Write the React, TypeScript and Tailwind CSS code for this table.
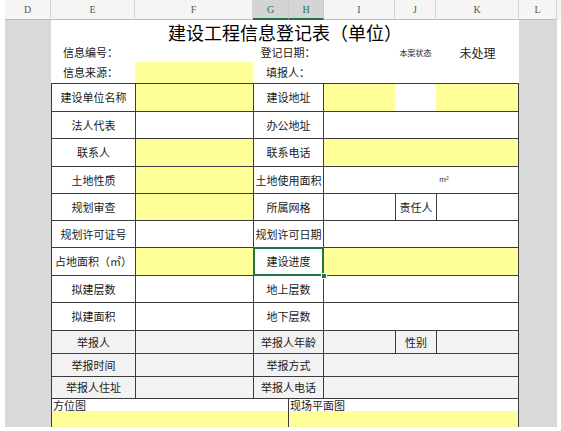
import type { ReactNode } from "react";

const cjk = "font-['Noto_Sans_CJK_SC','Noto_Sans',sans-serif]";

type CellProps = {
  children?: ReactNode;
  className?: string;
};

function Label({ children, className = "bg-white" }: CellProps) {
  return (
    <div className={`flex items-center justify-center text-[11px] text-[#1a1a1a] ${className}`}>
      {children}
    </div>
  );
}

function Fill({ className = "bg-white" }: CellProps) {
  return <div className={className} />;
}

const headers = [
  { key: "D", width: "w-[46px]" },
  { key: "E", width: "w-[84px]" },
  { key: "F", width: "w-[118px]" },
  { key: "G", width: "w-[36px]", active: true },
  { key: "H", width: "w-[35px]", active: true },
  { key: "I", width: "w-[71px]" },
  { key: "J", width: "w-[41px]" },
  { key: "K", width: "w-[83px]" },
  { key: "L", width: "w-[38px]" }
];

export default function App() {
  const yellow = "bg-[#ffff99]";
  const gray = "bg-[#f2f2f2]";

  return (
    <div className={`h-[431px] w-[561px] overflow-hidden bg-white pl-[5px] ${cjk}`}>
      {/* column headers */}
      <div className="flex h-[20px] bg-[#f5f5f5] font-['Liberation_Serif',serif] text-[10px] text-[#555]">
        {headers.map((h) => (
          <div
            key={h.key}
            className={
              h.active
                ? `${h.width} flex items-center justify-center border-r border-b-2 border-r-[#c8c8c8] border-b-[#217346] bg-[#d4d4d4] text-[#217346]`
                : `${h.width} flex items-center justify-center border-r border-b border-r-[#d4d4d4] border-b-[#bdbdbd]`
            }
          >
            {h.key}
          </div>
        ))}
      </div>

      <div className="flex h-[407px]">
        <div className="w-[46px] bg-[#d9d9d9]" />

        <div className="flex w-[468px] flex-col bg-white">
          <div className="flex h-[23px] items-center justify-center text-[18px] leading-none text-black">
            建设工程信息登记表（单位）
          </div>

          <div className="grid h-[19px] grid-cols-[84px_118px_70px_72px_41px_83px] items-center text-[11px] text-[#1a1a1a]">
            <span className="pl-[12px]">信息编号：</span>
            <span />
            <span className="text-center">登记日期：</span>
            <span />
            <span className="text-center text-[8px]">本案状态</span>
            <span className="text-center text-[12px]">未处理</span>
          </div>

          <div className="grid h-[21px] grid-cols-[84px_118px_70px_72px_41px_83px] items-center text-[11px] text-[#1a1a1a]">
            <span className="pl-[12px]">信息来源：</span>
            <span className={`h-full ${yellow}`} />
            <span className="text-center">填报人：</span>
          </div>

          <div className="grid flex-1 grid-cols-[83px_117px_34px_34px_71px_40px_81px] grid-rows-[27px_26px_27px_26px_26px_26px_27px_26px_27px_22px_22px_21px_28px] gap-px border-x border-t border-[#3c3c3c] bg-[#3c3c3c]">
            <Label>建设单位名称</Label>
            <Fill className={yellow} />
            <Label className="col-span-2 bg-white">建设地址</Label>
            <div className="col-span-3 flex">
              <div className={`w-[71px] ${yellow}`} />
              <div className="w-[41px] bg-white" />
              <div className={`flex-1 ${yellow}`} />
            </div>

            <Label>法人代表</Label>
            <Fill />
            <Label className="col-span-2 bg-white">办公地址</Label>
            <Fill className="col-span-3 bg-white" />

            <Label>联系人</Label>
            <Fill className={yellow} />
            <Label className="col-span-2 bg-white">联系电话</Label>
            <Fill className={`col-span-3 ${yellow}`} />

            <Label>土地性质</Label>
            <Fill className={yellow} />
            <Label className="col-span-2 bg-white">土地使用面积</Label>
            <div className="col-span-3 flex items-center justify-center bg-white pl-[46px] font-['Liberation_Sans',sans-serif] text-[8px] text-[#333]">
              m²
            </div>

            <Label>规划审查</Label>
            <Fill className={yellow} />
            <Label className="col-span-2 bg-white">所属网格</Label>
            <Fill />
            <Label>责任人</Label>
            <Fill />

            <Label>规划许可证号</Label>
            <Fill />
            <Label className="col-span-2 bg-white">规划许可日期</Label>
            <Fill className="col-span-3 bg-white" />

            <Label>占地面积（㎡）</Label>
            <Fill className={yellow} />
            <div className="relative col-span-2 flex items-center justify-center bg-white text-[11px] text-[#1a1a1a]">
              建设进度
              <div className="pointer-events-none absolute -inset-px z-10 border-2 border-[#217346]" />
              <div className="absolute -right-[4px] -bottom-[4px] z-20 size-[6px] border border-white bg-[#217346]" />
            </div>
            <Fill className={`col-span-3 ${yellow}`} />

            <Label>拟建层数</Label>
            <Fill />
            <Label className="col-span-2 bg-white">地上层数</Label>
            <Fill className="col-span-3 bg-white" />

            <Label>拟建面积</Label>
            <Fill />
            <Label className="col-span-2 bg-white">地下层数</Label>
            <Fill className="col-span-3 bg-white" />

            <Label className={gray}>举报人</Label>
            <Fill className={gray} />
            <Label className={`col-span-2 ${gray}`}>举报人年龄</Label>
            <Fill className={gray} />
            <Label className={gray}>性别</Label>
            <Fill className={gray} />

            <Label className={gray}>举报时间</Label>
            <Fill className={gray} />
            <Label className={`col-span-2 ${gray}`}>举报方式</Label>
            <Fill className={`col-span-3 ${gray}`} />

            <Label className={gray}>举报人住址</Label>
            <Fill className={gray} />
            <Label className={`col-span-2 ${gray}`}>举报人电话</Label>
            <Fill className={`col-span-3 ${gray}`} />

            <div className="col-span-3 flex flex-col bg-white text-[11px] text-[#1a1a1a]">
              <span className="h-[12px] pl-px leading-[12px]">方位图</span>
              <div className={`flex-1 ${yellow}`} />
            </div>
            <div className="col-span-4 flex flex-col bg-white text-[11px] text-[#1a1a1a]">
              <span className="h-[12px] pl-px leading-[12px]">现场平面图</span>
              <div className={`flex-1 ${yellow}`} />
            </div>
          </div>
        </div>

        <div className="w-[38px] bg-[#d9d9d9]" />
      </div>
    </div>
  );
}
